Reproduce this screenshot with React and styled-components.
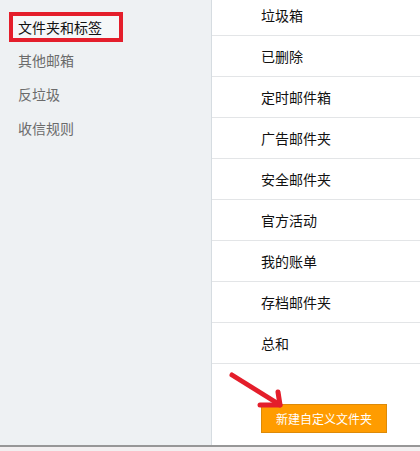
import styled, { createGlobalStyle } from "styled-components";

const GlobalStyle = createGlobalStyle`
  html, body {
    margin: 0;
    padding: 0;
    background: #ffffff;
    overflow: hidden;
  }
  body {
    font-family: "Noto Sans CJK SC", "Microsoft YaHei", sans-serif;
  }
`;

const Page = styled.div`
  width: 420px;
  height: 451px;
  display: flex;
  flex-direction: column;
  overflow: hidden;
`;

const Main = styled.div`
  height: 445px;
  display: flex;
`;

const Sidebar = styled.nav`
  width: 211px;
  flex: none;
  background: #eef1f3;
  border-right: 1px solid #d6dce1;
  padding-top: 12px;
  display: flex;
  flex-direction: column;
  align-items: flex-start;
`;

const NavItem = styled.div`
  height: 34px;
  padding-left: 18px;
  display: flex;
  align-items: center;
  font-size: 14px;
  color: #6b6b6b;
`;

const ActiveItem = styled.div`
  box-sizing: border-box;
  margin-left: 9px;
  width: 114px;
  height: 30px;
  border: 4px solid #e41e2b;
  background: #f5f7f8;
  padding-left: 5px;
  margin-bottom: 1px;
  display: flex;
  align-items: center;
  font-size: 14px;
  color: #111;
`;

const Content = styled.div`
  flex: 1;
  position: relative;
  display: flex;
  flex-direction: column;
`;

const FolderList = styled.ul`
  list-style: none;
  margin: -5px 0 0;
  padding: 0;
`;

const FolderRow = styled.li`
  height: 40px;
  border-bottom: 1px solid #e3e5e7;
  padding-left: 49px;
  display: flex;
  align-items: center;
  font-size: 14px;
  color: #111;
`;

const NewButton = styled.button`
  margin: 40px 0 0 49px;
  width: 126px;
  height: 29px;
  box-sizing: border-box;
  background: #ff9c00;
  border: 1px solid #dd8a08;
  color: #fff;
  font-family: inherit;
  font-size: 12px;
  padding: 0;
  cursor: pointer;
`;

const Arrow = styled.svg`
  position: absolute;
  left: 0;
  top: 360px;
  pointer-events: none;
`;

const BottomBar = styled.div`
  height: 6px;
  border-top: 2px solid #979797;
  background: #f2eff0;
  box-sizing: border-box;
`;

const navItems = ["其他邮箱", "反垃圾", "收信规则"];
const folders = [
  "垃圾箱",
  "已删除",
  "定时邮件箱",
  "广告邮件夹",
  "安全邮件夹",
  "官方活动",
  "我的账单",
  "存档邮件夹",
  "总和",
];

export default function App() {
  return (
    <>
      <GlobalStyle />
      <Page>
        <Main>
          <Sidebar>
            <ActiveItem>文件夹和标签</ActiveItem>
            {navItems.map((n) => (
              <NavItem key={n}>{n}</NavItem>
            ))}
          </Sidebar>
          <Content>
            <FolderList>
              {folders.map((f) => (
                <FolderRow key={f}>{f}</FolderRow>
              ))}
            </FolderList>
            <NewButton>新建自定义文件夹</NewButton>
            <Arrow width="90" height="60" viewBox="0 0 90 60">
              <g stroke="#e41e2b" strokeWidth="5" strokeLinecap="round" fill="none">
                <line x1="20" y1="15" x2="65" y2="43" />
                <line x1="48" y1="45" x2="68" y2="45" />
                <line x1="66" y1="32" x2="68" y2="45" />
              </g>
            </Arrow>
          </Content>
        </Main>
        <BottomBar />
      </Page>
    </>
  );
}
